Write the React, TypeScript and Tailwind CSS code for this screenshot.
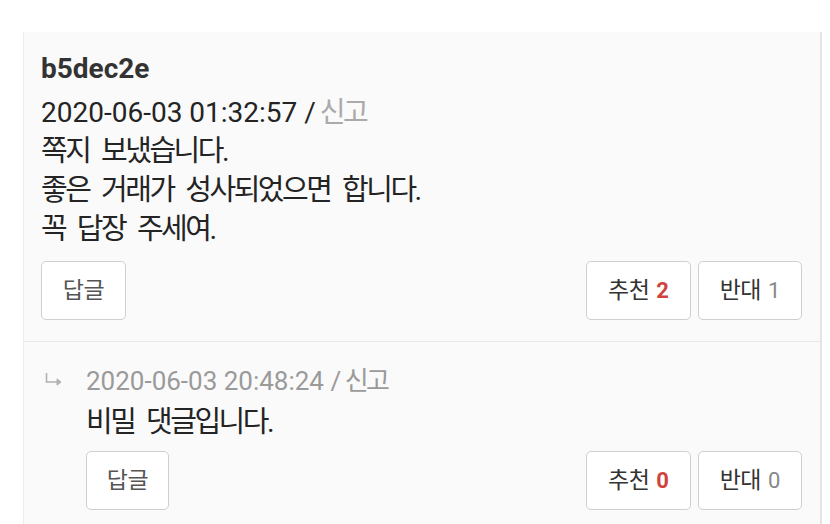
import React from "react";

const FONT = "font-['Roboto','Noto_Sans_CJK_KR',sans-serif]";

function Btn({
  width,
  children,
}: {
  width: string;
  children: React.ReactNode;
}) {
  return (
    <button
      className={`${width} h-[59px] flex items-center justify-center gap-[7px] bg-white border border-[#cfcfcf] rounded-[5px] text-[22px] text-[#333] leading-none`}
    >
      {children}
    </button>
  );
}

function Actions({ up, down, replyWidth }: { up: number; down: number; replyWidth: string }) {
  return (
    <div className="flex items-center justify-between">
      <Btn width={replyWidth}>
        <span className="text-[#555] text-[23px] tracking-[-0.5px]">답글</span>
      </Btn>
      <div className="flex gap-[7px]">
        <Btn width="w-[105px]">
          <span className="text-[23px] tracking-[-0.5px]">추천</span>
          <span className="font-bold text-[#d2423d]">{up}</span>
        </Btn>
        <Btn width="w-[104px]">
          <span className="text-[23px] tracking-[-0.5px]">반대</span>
          <span className="text-[#888]">{down}</span>
        </Btn>
      </div>
    </div>
  );
}

// hangul lines: a bit larger, tighter, with wider word gaps
function K({ children }: { children: React.ReactNode }) {
  return <span className="text-[29px] tracking-[-2.5px] [word-spacing:7px]">{children}</span>;
}

export default function App() {
  return (
    <div className={`min-h-screen bg-white pt-8 pl-[23px] pr-[8px] ${FONT}`}>
      <div className="bg-[#fafafa] border-l border-l-[#ededed] border-r-2 border-r-[#e4e4e4] min-h-[500px]">
        {/* comment */}
        <div className="pl-[17px] pr-[18px] pt-[17px] pb-[21px] border-b border-[#e8e8e8] text-[28px] text-[#242424]">
          <div className="font-bold leading-[40px] text-[#333]">b5dec2e</div>
          <div className="mt-1 h-[39px] leading-[39px]">
            2020-06-03 01:32:57 /{" "}
            <span className="text-[#aaa] text-[28px] tracking-[-2.5px] -ml-[3px]">신고</span>
          </div>
          <div className="h-[39px] leading-[39px]">
            <K>쪽지 보냈습니다.</K>
          </div>
          <div className="h-[39px] leading-[39px]">
            <K>좋은 거래가 성사되었으면 합니다.</K>
          </div>
          <div className="h-[39px] leading-[39px]">
            <K>꼭 답장 주세여.</K>
          </div>
          <div className="mt-3">
            <Actions up={2} down={1} replyWidth="w-[85px]" />
          </div>
        </div>

        {/* reply */}
        <div className="flex pl-[21px] pr-[18px] pt-[20px]">
          <div className="w-[41px] shrink-0 pt-[11px]">
            <svg width="19" height="14" viewBox="0 0 19 14" fill="none" stroke="#b3b3b3" strokeWidth="1.6">
              <path d="M1.5 0v9h13" />
              <path d="M12 5.8l4 3.2-4 3.2z" fill="#b3b3b3" strokeWidth="1" />
            </svg>
          </div>
          <div className="flex-1">
            <div className="h-[39px] text-[26px] leading-[39px] text-[#9a9a9a]">
              2020-06-03 20:48:24 /{" "}
              <span className="tracking-[-2.5px] -ml-[3px]">신고</span>
            </div>
            <div className="h-[42px] leading-[42px] text-[#242424]">
              <K>비밀 댓글입니다.</K>
            </div>
            <div className="mt-2">
              <Actions up={0} down={0} replyWidth="w-[83px]" />
            </div>
          </div>
        </div>
      </div>
    </div>
  );
}
